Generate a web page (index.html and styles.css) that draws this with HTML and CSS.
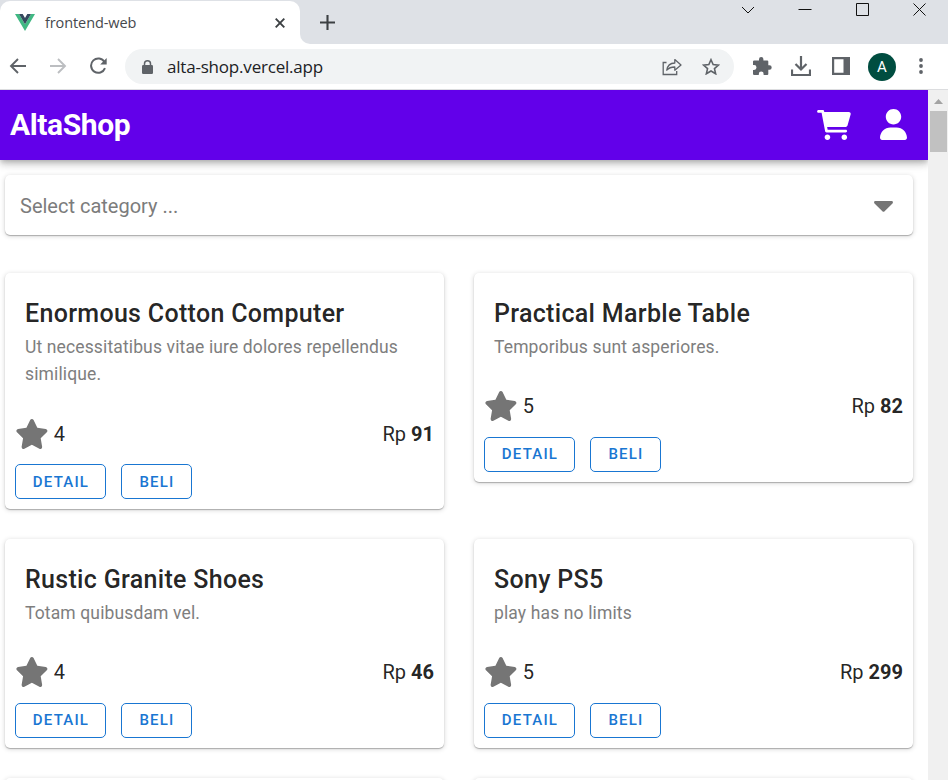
FILE: index.html
```
<!DOCTYPE html>
<html lang="en">
<head>
<meta charset="utf-8">
<title>frontend-web</title>
<link rel="stylesheet" href="styles.css">
</head>
<body>
<svg class="defs" width="0" height="0" aria-hidden="true">
  <symbol id="star" viewBox="0 0 576 512"><path d="M316.9 18C311.6 7 300.4 0 288.1 0s-23.4 7-28.8 18L195 150.3 51.4 171.5c-12 1.8-22 10.2-25.7 21.7s-.7 24.2 7.9 32.7L137.8 329 113.2 474.7c-2 12 3 24.2 12.9 31.3s23 8 33.8 2.3l128.3-68.5 128.3 68.5c10.8 5.7 23.9 4.9 33.8-2.3s14.9-19.3 12.9-31.3L438.5 329 542.7 225.9c8.6-8.5 11.7-21.2 7.9-32.7s-13.7-19.9-25.7-21.7L381.2 150.3 316.9 18z"/></symbol>
</svg>

<div class="tabstrip">
  <div class="tab">
    <svg class="favicon" width="20" height="17" viewBox="0 0 20 17"><path fill="#41b883" d="M0 0h4l6 10.3L16 0h4L10 17z"/><path fill="#35495e" d="M4 0h3.7L10 4l2.3-4H16l-6 10.3z"/></svg>
    <span class="tab-title">frontend-web</span>
    <svg class="tab-close" width="10" height="10" viewBox="0 0 10 10"><path d="M.7.7l8.6 8.6M9.3.7L.7 9.3" stroke="#3c4043" stroke-width="1.9"/></svg>
  </div>
  <div class="new-tab">
    <svg width="15" height="15" viewBox="0 0 15 15"><path d="M7.5 0v15M0 7.5h15" stroke="#3c4043" stroke-width="2.1"/></svg>
  </div>
  <div class="window-controls">
    <svg width="14" height="14" viewBox="0 0 14 14"><path d="M1 4l6 6 6-6"/></svg>
    <svg width="14" height="14" viewBox="0 0 14 14"><path d="M.5 6.5h13"/></svg>
    <svg width="14" height="14" viewBox="0 0 14 14"><path d="M1.5.5h12v12h-12z"/></svg>
    <svg width="14" height="14" viewBox="0 0 14 14"><path d="M1.5.5l12 12M13.5.5l-12 12"/></svg>
  </div>
</div>

<div class="toolbar">
  <div class="nav">
    <svg width="18" height="18" viewBox="0 0 18 18"><path d="M17 9H2M9 2L2 9l7 7" fill="none" stroke="#5f6368" stroke-width="1.9"/></svg>
    <svg width="18" height="18" viewBox="0 0 18 18"><path d="M1 9h15M9 2l7 7-7 7" fill="none" stroke="#bcbec1" stroke-width="1.9"/></svg>
    <svg width="18" height="18" viewBox="0 0 18 18"><path d="M15.5 5A7.2 7.2 0 1 0 16 11.2" fill="none" stroke="#5f6368" stroke-width="2"/><path d="M17.7.9v6.5h-6.5z" fill="#5f6368"/></svg>
  </div>
  <div class="omnibox">
    <svg width="11" height="14" viewBox="0 0 11 14"><path d="M2.5 6V3.8a3 3 0 0 1 6 0V6" fill="none" stroke="#5f6368" stroke-width="1.5"/><rect y="5" width="11" height="9" rx="1.2" fill="#5f6368"/></svg>
    <span class="url">alta-shop.vercel.app</span>
    <svg class="share" width="20" height="18" viewBox="0 0 20 18"><g fill="none" stroke="#5f6368" stroke-width="1.3"><path d="M4.5 4.5H1.2v12h13.5v-3.6"/><path d="M4.8 12.2C5.4 7.8 8.4 5.2 12.8 5V1.6L19 7l-6.2 5.2V9C9.3 9 6.8 9.8 4.8 12.2z" stroke-linejoin="round"/></g></svg>
    <svg width="18" height="17" viewBox="0 0 18 17"><path d="M9 1.7l2.15 4.9 5.3.5-4 3.5 1.2 5.2L9 13l-4.65 2.8 1.2-5.2-4-3.5 5.3-.5z" fill="none" stroke="#5f6368" stroke-width="1.6"/></svg>
  </div>
  <div class="actions">
    <svg width="19" height="18" viewBox="0 0 19 18"><path fill="#5f6368" d="M1.2 3.5H6V2.3a2.2 2.2 0 0 1 4.4 0v1.2h3.8q1.1 0 1.1 1.1V8.3h1.2a2.2 2.2 0 0 1 0 4.4h-1.2v4.2q0 1.1-1.1 1.1H10.600v-1.100a2.400 2.400 0 0 0-4.800 0V18H1.200Q0 18 0 16.900v-4h1.100a2.400 2.400 0 0 0 0-4.800H0V4.600q0-1.100 1.200-1.100z"/></svg>
    <svg width="20" height="20" viewBox="0 0 20 20"><path d="M10 0v13M4.500 8L10 13.500 15.500 8M1 13.500V19h18v-5.500" fill="none" stroke="#5f6368" stroke-width="2.200"/></svg>
    <svg width="18" height="18" viewBox="0 0 18 18"><path fill="#5f6368" fill-rule="evenodd" d="M0 0h18v18H0zM2.200 2.200v13.600h9.300V2.200z"/></svg>
    <div class="avatar">A</div>
    <svg class="kebab" width="4" height="16" viewBox="0 0 4 16"><g fill="#5f6368"><circle cx="2" cy="2" r="1.900"/><circle cx="2" cy="8" r="1.900"/><circle cx="2" cy="14" r="1.900"/></g></svg>
  </div>
</div>

<div class="viewport">
  <div class="page">
    <header class="app-bar">
      <h1>AltaShop</h1>
      <svg class="cart" width="34" height="30" viewBox="0 0 576 512"><path d="M96 0C107.500 0 117.400 8.190 119.600 19.510L121.100 32H541.800C562.100 32 578.300 52.250 572.600 72.660L518.600 264.700C514.700 278.500 502.100 288 488.200 288H170.700L179.900 336H488C501.300 336 512 346.700 512 360C512 373.300 501.300 384 488 384H159.100C148.500 384 138.600 375.800 136.400 364.500L76.140 48H24C10.750 48 0 37.250 0 24C0 10.750 10.750 0 24 0H96zM128 464C128 437.500 149.500 416 176 416C202.500 416 224 437.500 224 464C224 490.500 202.500 512 176 512C149.500 512 128 490.500 128 464zM512 464C512 490.500 490.500 512 464 512C437.500 512 416 490.500 416 464C416 437.500 437.500 416 464 416C490.500 416 512 437.500 512 464z"/></svg>
      <svg width="27" height="31" viewBox="0 0 448 512"><path d="M224 256c70.700 0 128-57.310 128-128s-57.300-128-128-128C153.300 0 96 57.310 96 128S153.300 256 224 256zM274.700 304H173.300C77.610 304 0 381.600 0 477.300c0 19.140 15.520 34.670 34.660 34.670h378.700C432.500 512 448 496.500 448 477.300C448 381.600 370.400 304 274.700 304z"/></svg>
    </header>

    <div class="select">
      <span>Select category ...</span>
      <svg width="19" height="11" viewBox="0 0 19 11"><path fill="#757575" d="M1.400 0h16.200c1.300 0 1.800 1.500.9 2.400l-7.900 7.900a1.600 1.600 0 0 1-2.200 0L.5 2.400C-.4 1.500.1 0 1.400 0z"/></svg>
    </div>

    <main class="grid">
      <article class="card">
        <div class="card-item"><h2>Enormous Cotton Computer</h2><p>Ut necessitatibus vitae iure dolores repellendus similique.</p></div>
        <div class="meta"><svg class="star"><use href="#star"/></svg><span>4</span><span class="price">Rp <b>91</b></span></div>
        <div class="buttons"><button class="detail">Detail</button><button class="buy">Beli</button></div>
      </article>
      <article class="card">
        <div class="card-item"><h2>Practical Marble Table</h2><p>Temporibus sunt asperiores.</p></div>
        <div class="meta"><svg class="star"><use href="#star"/></svg><span>5</span><span class="price">Rp <b>82</b></span></div>
        <div class="buttons"><button class="detail">Detail</button><button class="buy">Beli</button></div>
      </article>
      <article class="card">
        <div class="card-item"><h2>Rustic Granite Shoes</h2><p>Totam quibusdam vel.</p></div>
        <div class="meta"><svg class="star"><use href="#star"/></svg><span>4</span><span class="price">Rp <b>46</b></span></div>
        <div class="buttons"><button class="detail">Detail</button><button class="buy">Beli</button></div>
      </article>
      <article class="card">
        <div class="card-item"><h2>Sony PS5</h2><p>play has no limits</p></div>
        <div class="meta"><svg class="star"><use href="#star"/></svg><span>5</span><span class="price">Rp <b>299</b></span></div>
        <div class="buttons"><button class="detail">Detail</button><button class="buy">Beli</button></div>
      </article>
      <article class="card next"></article>
      <article class="card next"></article>
    </main>
  </div>
  <div class="scrollbar">
    <svg width="9" height="5" viewBox="0 0 9 5"><path d="M0 5L4.500 0 9 5z" fill="#a3a3a3"/></svg>
    <div class="thumb"></div>
  </div>
</div>
</body>
</html>
```
FILE: styles.css
```
* { box-sizing: border-box; }
html, body { height: 100%; }
body {
  margin: 0;
  display: flex;
  flex-direction: column;
  overflow: hidden;
  background: #fff;
  font-family: Roboto, sans-serif;
  color: rgba(0, 0, 0, .87);
}
svg { display: block; flex: none; }
.defs { position: absolute; }

/* Browser window */
.tabstrip { flex: none; display: flex; height: 44px; background: #fff; }
.tab {
  width: 300px;
  display: flex;
  align-items: center;
  padding: 1px 15px 0;
  position: relative;
}
.tab::before {
  content: "";
  position: absolute;
  inset: 0;
  background: #dee1e6;
}
.tab::after {
  content: "";
  position: absolute;
  inset: 1px 0 0;
  background: #fff;
  border-radius: 10px 10px 0 0;
}
.tab > * { position: relative; z-index: 1; }
.tab-title {
  margin-left: 10px;
  font: 14.5px "Open Sans", sans-serif;
  letter-spacing: -.1px;
  color: #45494d;
}
.tab-close { margin-left: auto; }
.new-tab {
  width: 60px;
  padding: 15px 0 0 20px;
  background: #dee1e6;
  border-bottom-left-radius: 10px;
}
.window-controls {
  flex: 1;
  display: flex;
  justify-content: flex-end;
  gap: 43px;
  padding: 3px 22px 0 0;
  background: #dee1e6;
}
.window-controls svg { fill: none; stroke: #111; stroke-width: 1; }

.toolbar {
  flex: none;
  display: flex;
  align-items: center;
  height: 46px;
  border-bottom: 1px solid #dcdddf;
}
.nav { display: flex; gap: 22px; width: 125px; padding: 0 0 1px 8.5px; }
.omnibox {
  display: flex;
  align-items: center;
  width: 609px;
  height: 35px;
  padding: 0 14px 0 17px;
  border-radius: 18px;
  background: #f1f3f4;
}
.url {
  margin-left: 14px;
  font: 17px "Open Sans", sans-serif;
  letter-spacing: -.2px;
  color: #202124;
}
.share { margin-left: auto; margin-right: 20px; }
.actions { flex: 1; display: flex; align-items: center; padding: 0 0 1px 19px; }
.actions > :nth-child(2) { margin-left: 19px; }
.actions > :nth-child(3) { margin-left: 21px; }
.avatar {
  width: 28px;
  height: 28px;
  margin: 1px 0 0 18px;
  border-radius: 50%;
  background: #004d40;
  color: #fff;
  font-size: 15px;
  line-height: 29px;
  text-align: center;
}
.kebab { margin-left: 23px; }

/* Page */
.viewport { flex: 1; min-height: 0; display: flex; }
.page { flex: 1; overflow: hidden; }
.app-bar {
  display: flex;
  align-items: center;
  height: 70px;
  padding: 0 21px 0 10px;
  background: #6200ea;
  box-shadow: 0 2.5px 5px -1.25px rgba(0, 0, 0, .2), 0 5px 6.25px rgba(0, 0, 0, .14), 0 1.25px 12.5px rgba(0, 0, 0, .12);
}
.app-bar h1 {
  margin: 0 auto 2px 0;
  font-size: 30px;
  font-weight: 700;
  letter-spacing: -.4px;
  color: #fff;
}
.app-bar svg { fill: #fff; margin-bottom: 1px; }
.app-bar .cart { margin-right: 29px; }
.select, .card {
  background: #fff;
  border-radius: 5px;
  box-shadow: 0 1px 1px rgba(0, 0, 0, .25), 0 1px 5px rgba(0, 0, 0, .18);
}
.select {
  display: flex;
  align-items: center;
  justify-content: space-between;
  height: 60px;
  margin: 15px 15px 0 5px;
  padding: 2px 20.5px 0 15px;
  font-size: 20px;
  color: #7c7c7c;
}
.grid {
  display: grid;
  grid-template-columns: 1fr 1fr;
  gap: 30px;
  align-items: start;
  margin: 38px 15px 0 5px;
}
.card-item { padding: 21px 20px 19.5px; }
.card h2 {
  margin: 0 0 -.5px;
  font-size: 25px;
  line-height: 40px;
  font-weight: 500;
  letter-spacing: .0125em;
}
.card p {
  margin: 0;
  font-size: 17.5px;
  line-height: 27.5px;
  letter-spacing: .13px;
  color: #7e7e7e;
}
.meta {
  display: flex;
  align-items: center;
  height: 51px;
  padding: 0 10px;
  font-size: 20px;
}
.star { width: 33.75px; height: 30px; margin-right: 5px; fill: #757575; }
.price { margin-left: auto; }
.buttons { display: flex; gap: 15px; padding: 5px 10px 10px; }
.buttons button {
  height: 35px;
  padding: 0 0 0 1px;
  border: 1px solid #1976d2;
  border-radius: 5px;
  background: none;
  color: #1976d2;
  font: 500 15px Roboto, sans-serif;
  letter-spacing: 1.2px;
  text-transform: uppercase;
}
.buttons .detail { width: 91px; }
.buttons .buy { width: 71px; }
.next { height: 200px; }

.scrollbar { width: 20px; background: #f0f0f0; padding: 9px 1px 0 2px; }
.scrollbar svg { margin: 0 auto; }
.thumb { height: 41px; margin-top: 7px; background: #c1c1c1; }
```
